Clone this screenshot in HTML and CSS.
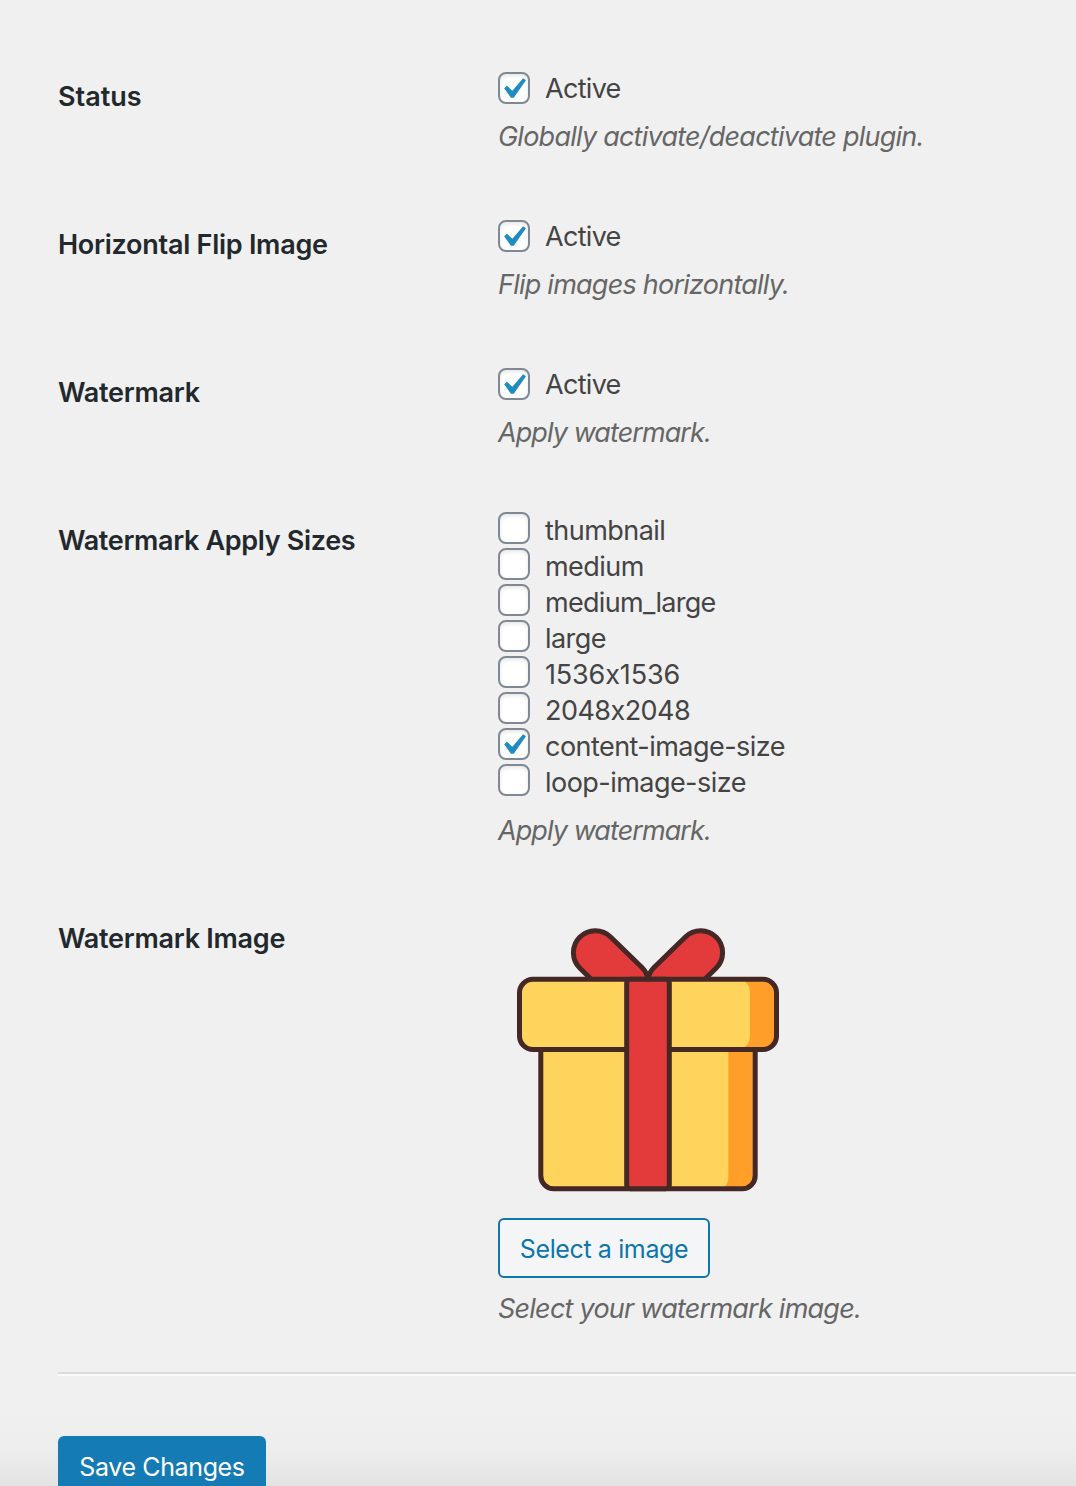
FILE: index.html
```html
<!DOCTYPE html>
<html lang="en">
<head>
<meta charset="utf-8">
<title>Image Settings</title>
<link rel="stylesheet" href="styles.css">
</head>
<body>
<svg class="defs" aria-hidden="true"><symbol id="check" viewBox="0 0 20 20"><path d="M14.83 4.89l1.34.94-5.81 8.38H9.02L5.78 9.67l1.34-1.25 2.57 2.4z" fill="#1e8cbe"/></symbol></svg>
<main class="page">
  <form class="settings">
    <section class="row">
      <h2 class="name loose">Status</h2>
      <div class="field">
        <label class="option"><span class="box"><svg class="tick"><use href="#check"/></svg></span><span class="text tight">Active</span></label>
        <p class="desc">Globally activate/deactivate plugin.</p>
      </div>
    </section>
    <section class="row">
      <h2 class="name">Horizontal Flip Image</h2>
      <div class="field">
        <label class="option"><span class="box"><svg class="tick"><use href="#check"/></svg></span><span class="text tight">Active</span></label>
        <p class="desc">Flip images horizontally.</p>
      </div>
    </section>
    <section class="row">
      <h2 class="name">Watermark</h2>
      <div class="field">
        <label class="option"><span class="box"><svg class="tick"><use href="#check"/></svg></span><span class="text tight">Active</span></label>
        <p class="desc short">Apply watermark.</p>
      </div>
    </section>
    <section class="row">
      <h2 class="name snug">Watermark Apply Sizes</h2>
      <div class="field sizes">
        <label class="option"><span class="box"></span><span class="text">thumbnail</span></label>
        <label class="option"><span class="box"></span><span class="text">medium</span></label>
        <label class="option"><span class="box"></span><span class="text tight">medium_large</span></label>
        <label class="option"><span class="box"></span><span class="text">large</span></label>
        <label class="option"><span class="box"></span><span class="text digits">1536x1536</span></label>
        <label class="option"><span class="box"></span><span class="text">2048x2048</span></label>
        <label class="option"><span class="box"><svg class="tick"><use href="#check"/></svg></span><span class="text">content-image-size</span></label>
        <label class="option"><span class="box"></span><span class="text">loop-image-size</span></label>
        <p class="desc short">Apply watermark.</p>
      </div>
    </section>
    <section class="row">
      <h2 class="name">Watermark Image</h2>
      <div class="field media">
        <svg class="gift" viewBox="0 0 300 300" stroke-linejoin="round">
          <g fill="#e33b3c" stroke="#432826" stroke-width="5">
            <path d="M94 70 82 58.3A21.8 21.8 0 0 1 112.6 27L144 57.5Q149 62.5 150 69.5z"/>
            <path d="M206 70 218 58.3A21.8 21.8 0 0 0 187.4 27L156 57.5Q151 62.5 150 69.5z"/>
          </g>
          <path d="M42.8 139.5H257.2V265.8a13 13 0 0 1-13 13H55.8a13 13 0 0 1-13-13z" fill="#ff9f2a"/>
          <path d="M42.8 139.5H230.3V267q0 8-6 11.8H55.8a13 13 0 0 1-13-13z" fill="#ffd45c"/>
          <path d="M42.8 139.5H257.2V265.8a13 13 0 0 1-13 13H55.8a13 13 0 0 1-13-13z" fill="none" stroke="#432826" stroke-width="5"/>
          <rect x="21.5" y="69.3" width="257" height="70.2" rx="13.5" fill="#ff9f2a"/>
          <path d="M35 69.3H242q10 3 10 13V126q0 10-10 13.5H35a13.5 13.5 0 0 1-13.5-13.5V82.8a13.5 13.5 0 0 1 13.5-13.5z" fill="#ffd45c"/>
          <rect x="21.5" y="69.3" width="257" height="70.2" rx="13.5" fill="none" stroke="#432826" stroke-width="5"/>
          <rect x="128.7" y="69.3" width="42.6" height="209.5" rx="3.5" fill="#e33b3c" stroke="#432826" stroke-width="5"/>
        </svg>
        <button type="button" class="btn pick">Select a image</button>
        <p class="desc">Select your watermark image.</p>
      </div>
    </section>
  </form>
  <footer class="actions">
    <button type="button" class="btn save">Save Changes</button>
  </footer>
</main>
</body>
</html>
```
FILE: styles.css
```css
* { box-sizing: border-box; }
body {
  margin: 0;
  background: #f0f0f0;
  color: #444;
  font: 27px/38px Inter, "Liberation Sans", sans-serif;
}
.defs { display: none; }
.page {
  height: 1486px;
  overflow: hidden;
  padding: 38px 0 0 58px;
  background: linear-gradient(#f0f0f0 1410px, #ededed 1450px, #e3e3e3 1486px);
}
.row {
  display: grid;
  grid-template-columns: 440px 1fr;
  padding: 32px 0;
}
.name {
  margin: 8px 0 0;
  font-size: 27px;
  font-weight: 600;
  color: #23282d;
  letter-spacing: -0.26px;
}
.name.loose { letter-spacing: 0; }
.name.snug { letter-spacing: -0.34px; }
.option {
  display: flex;
  align-items: center;
  gap: 15px;
  height: 36px;
}
.text {
  height: 36px;
  letter-spacing: -0.54px;
}
.text.tight { letter-spacing: -0.7px; }
.text.digits {
  letter-spacing: -0.15px;
  font-feature-settings: "calt" 0;
}
.box {
  width: 32px;
  height: 32px;
  flex: none;
  border: 2px solid #7e8993;
  border-radius: 8px;
  background: #fff;
  box-shadow: inset 0 2px 4px rgba(0, 0, 0, .1);
}
.tick {
  display: block;
  width: 42px;
  height: 42px;
  margin: -6px 0 0 -8px;
}
.sizes { margin-top: -2px; }
.sizes .option { align-items: flex-start; }
.desc {
  height: 36px;
  margin: 12px 0 0;
  color: #666;
  font-style: italic;
  letter-spacing: -0.76px;
}
.desc.short { letter-spacing: -0.92px; }
.media { margin-top: -2px; }
.gift {
  display: block;
  width: 300px;
  height: 300px;
}
.btn {
  display: block;
  height: 60px;
  padding: 2px 0 0;
  border: 2px solid #0f76a8;
  border-radius: 6px;
  font: 25px/54px Inter, "Liberation Sans", sans-serif;
  letter-spacing: -0.38px;
}
.pick {
  width: 212px;
  margin-top: 8px;
  background: #f3f5f6;
  color: #0f76a8;
}
.actions {
  margin-top: 14px;
  padding-top: 62px;
  border-top: 2px solid #dcdcdc;
  box-shadow: inset 0 2px #fafafa;
}
.save {
  width: 208px;
  border-color: #147bb5;
  background: #147bb5;
  color: #fff;
}
```
